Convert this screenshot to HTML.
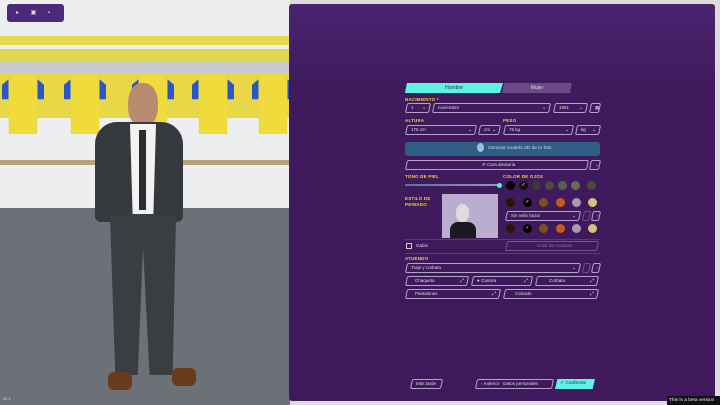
<!DOCTYPE html>
<html><head><meta charset="utf-8"><style>
*{box-sizing:border-box;margin:0;padding:0}
body{width:720px;height:405px;overflow:hidden;position:relative;background:#dcdcdc;font-family:"Liberation Sans",sans-serif}
.a{position:absolute}
.lbl{position:absolute;color:#f2d22a;font-size:4.5px;font-weight:bold;letter-spacing:.2px}
.sel{position:absolute;height:10px;border:1px solid #b7a2cf;border-radius:2px;transform:skewX(-12deg);color:#ddd;font-size:4.5px;line-height:8px;padding-left:4px}
.sel span{display:inline-block;transform:skewX(12deg)}
.sel .v{position:absolute;right:3px;top:0;font-size:5px}
.sw{position:absolute;width:9px;height:9px;border-radius:50%}
.jer{position:absolute;width:42px;height:58px}
</style></head><body>
<!-- scene -->
<div class="a" style="left:0;top:0;width:290px;height:405px;background:#eceeef"></div>
<div class="a" style="left:0;top:36px;width:290px;height:9px;background:#e6d94a"></div>
<div class="a" style="left:0;top:49px;width:290px;height:13px;background:#e0d64e"></div>
<div class="a" style="left:0;top:62px;width:290px;height:11px;background:#c8cad0"></div>
<div class="a" style="left:0;top:73px;width:290px;height:45px;background:#e8d848"></div>
<div class="a" style="left:0;top:160px;width:290px;height:5px;background:#b9a27a"></div>
<div class="a" style="left:0;top:208px;width:290px;height:197px;background:#6c7077"></div>
<div class="jer" style="left:2px;top:76px;background:linear-gradient(90deg,#2b56c8 0 16%,#efdc3c 16% 84%,#2b56c8 84%);clip-path:polygon(0 15%,25% 0,75% 0,100% 15%,100% 40%,84% 40%,84% 100%,16% 100%,16% 40%,0 40%)"></div>
<div class="jer" style="left:64px;top:76px;background:linear-gradient(90deg,#2b56c8 0 16%,#efdc3c 16% 84%,#2b56c8 84%);clip-path:polygon(0 15%,25% 0,75% 0,100% 15%,100% 40%,84% 40%,84% 100%,16% 100%,16% 40%,0 40%)"></div>
<div class="jer" style="left:132px;top:76px;background:linear-gradient(90deg,#2b56c8 0 16%,#efdc3c 16% 84%,#2b56c8 84%);clip-path:polygon(0 15%,25% 0,75% 0,100% 15%,100% 40%,84% 40%,84% 100%,16% 100%,16% 40%,0 40%)"></div>
<div class="jer" style="left:192px;top:76px;background:linear-gradient(90deg,#2b56c8 0 16%,#efdc3c 16% 84%,#2b56c8 84%);clip-path:polygon(0 15%,25% 0,75% 0,100% 15%,100% 40%,84% 40%,84% 100%,16% 100%,16% 40%,0 40%)"></div>
<div class="jer" style="left:252px;top:76px;background:linear-gradient(90deg,#2b56c8 0 16%,#efdc3c 16% 84%,#2b56c8 84%);clip-path:polygon(0 15%,25% 0,75% 0,100% 15%,100% 40%,84% 40%,84% 100%,16% 100%,16% 40%,0 40%)"></div>
<!-- man -->
<div class="a" style="left:128px;top:83px;width:30px;height:44px;border-radius:45%;background:#b98c70"></div>
<div class="a" style="left:95px;top:122px;width:88px;height:100px;border-radius:22px 22px 6px 6px;background:#35383c"></div>
<div class="a" style="left:130px;top:124px;width:26px;height:90px;background:#f2f2f2;clip-path:polygon(0 0,100% 0,90% 100%,10% 100%)"></div>
<div class="a" style="left:139px;top:130px;width:7px;height:80px;background:#2a2c2f"></div>
<div class="a" style="left:110px;top:215px;width:66px;height:160px;background:#3a3d41;clip-path:polygon(0 0,100% 0,95% 100%,60% 100%,50% 20%,42% 100%,8% 100%)"></div>
<div class="a" style="left:108px;top:372px;width:24px;height:18px;border-radius:6px;background:#6a3a1c"></div>
<div class="a" style="left:172px;top:368px;width:24px;height:18px;border-radius:6px;background:#6a3a1c"></div>
<!-- toolbar -->
<div class="a" style="left:7px;top:4px;width:57px;height:18px;border-radius:3px;background:#4b2a7c;color:#ddd;font-size:6px;line-height:18px;word-spacing:10px;padding-left:9px">▸ ▣ ▪</div>
<div class="a" style="left:3px;top:396px;color:#ddd;font-size:4px">20.1</div>
<!-- panel -->
<div class="a" style="left:289px;top:4px;width:426px;height:397px;border-radius:3px;background:linear-gradient(#4a2470,#3f1b5e 20%,#3e1a5c)"></div>
<!-- tabs -->
<div class="a" style="left:405px;top:83px;width:98px;height:10px;background:#5ff2e6;clip-path:polygon(2% 0,100% 0,97% 100%,0 100%);color:#1a2a3a;font-size:5px;text-align:center;line-height:10px">Hombre</div>
<div class="a" style="left:502px;top:83px;width:70px;height:10px;background:#6c4a8a;clip-path:polygon(3% 0,100% 0,97% 100%,0 100%);color:#ddd;font-size:5px;text-align:center;line-height:10px">Mujer</div>
<div class="lbl" style="left:405px;top:97px">NACIMIENTO *</div>
<div class="sel" style="left:406px;top:103px;width:24px"><span>1</span><span class="v">⌄</span></div>
<div class="sel" style="left:433px;top:103px;width:117px"><span>noviembre</span><span class="v">⌄</span></div>
<div class="sel" style="left:554px;top:103px;width:33px"><span>1981</span><span class="v">⌄</span></div>
<div class="sel" style="left:590px;top:103px;width:10px"><span>▦</span></div>
<div class="lbl" style="left:405px;top:118px">ALTURA</div>
<div class="lbl" style="left:503px;top:118px">PESO</div>
<div class="sel" style="left:406px;top:125px;width:70px"><span>175 cm</span><span class="v">⌄</span></div>
<div class="sel" style="left:479px;top:125px;width:21px"><span>cm</span><span class="v">⌄</span></div>
<div class="sel" style="left:504px;top:125px;width:69px"><span>75 kg</span><span class="v">⌄</span></div>
<div class="sel" style="left:576px;top:125px;width:24px"><span>kg</span><span class="v">⌄</span></div>
<div class="a" style="left:405px;top:142px;width:195px;height:14px;border-radius:3px;background:#2f5e86;color:#cfd8e2;font-size:4.8px;line-height:14px;padding-left:72px"><span style="display:inline-block;width:7px;height:9px;border-radius:50%;background:#9fc0d8;vertical-align:middle;margin-right:4px"></span>Generar modelo 3D de tu foto</div>
<div class="sel" style="left:406px;top:160px;width:182px;text-align:center"><span>⟳ Cara aleatoria</span></div>
<div class="sel" style="left:590px;top:160px;width:10px"><span>⌄</span></div>
<div class="lbl" style="left:405px;top:174px">TONO DE PIEL</div>
<div class="lbl" style="left:503px;top:174px">COLOR DE OJOS</div>
<div class="a" style="left:405px;top:184px;width:95px;height:2px;background:linear-gradient(90deg,#5a6fa8,#8a9ad0)"></div>
<div class="sw" style="left:497px;top:183px;width:5px;height:5px;background:#4ff0ea"></div>
<div class="sw" style="left:506px;top:181px;background:#000"></div>
<div class="sw" style="left:519px;top:181px;background:#111;color:#fff;font-size:5px;text-align:center;line-height:9px">✓</div>
<div class="sw" style="left:532px;top:181px;background:#3b3a3a"></div>
<div class="sw" style="left:545px;top:181px;background:#4d4a3a"></div>
<div class="sw" style="left:558px;top:181px;background:#55604b"></div>
<div class="sw" style="left:571px;top:181px;background:#6b6a52"></div>
<div class="sw" style="left:587px;top:181px;background:#4a4a3e"></div>
<div class="lbl" style="left:405px;top:196px;line-height:6px">ESTILO DE<br>PEINADO</div>
<div class="a" style="left:442px;top:194px;width:56px;height:44px;background:#b9aecf;overflow:hidden"><div class="a" style="left:14px;top:10px;width:13px;height:18px;border-radius:45%;background:#ddd"></div><div class="a" style="left:8px;top:28px;width:26px;height:18px;border-radius:8px 8px 0 0;background:#1a1a1e"></div></div>
<div class="sw" style="left:506px;top:198px;background:#2a1508"></div>
<div class="sw" style="left:523px;top:198px;background:#000;color:#fff;font-size:5px;text-align:center;line-height:9px">✓</div>
<div class="sw" style="left:539px;top:198px;background:#7a5020"></div>
<div class="sw" style="left:556px;top:198px;background:#c85a1e"></div>
<div class="sw" style="left:572px;top:198px;background:#a79ab0"></div>
<div class="sw" style="left:588px;top:198px;background:#d8c07a"></div>
<div class="sel" style="left:506px;top:211px;width:74px"><span>Sin vello facial</span><span class="v">⌄</span></div>
<div class="sel" style="left:583px;top:211px;width:7px;opacity:.4"></div>
<div class="sel" style="left:592px;top:211px;width:8px"><span>›</span></div>
<div class="sw" style="left:506px;top:224px;background:#2a1508"></div>
<div class="sw" style="left:523px;top:224px;background:#000;color:#fff;font-size:5px;text-align:center;line-height:9px">✓</div>
<div class="sw" style="left:539px;top:224px;background:#7a5020"></div>
<div class="sw" style="left:556px;top:224px;background:#c85a1e"></div>
<div class="sw" style="left:572px;top:224px;background:#a79ab0"></div>
<div class="sw" style="left:588px;top:224px;background:#d8c07a"></div>
<div class="a" style="left:405px;top:239px;width:195px;height:1px;background:#5a3a78"></div>
<div class="a" style="left:406px;top:243px;width:6px;height:6px;border:1px solid #ccc"></div>
<div class="a" style="left:416px;top:243px;color:#ddd;font-size:4.5px">Gafas</div>
<div class="sel" style="left:506px;top:241px;width:92px;opacity:.45;text-align:center"><span>Color de montura</span></div>
<div class="a" style="left:405px;top:253px;width:195px;height:1px;background:#5a3a78"></div>
<div class="lbl" style="left:405px;top:256px">ATUENDO</div>
<div class="sel" style="left:406px;top:263px;width:174px"><span>Traje y corbata</span><span class="v">⌄</span></div>
<div class="sel" style="left:583px;top:263px;width:7px;opacity:.4"></div>
<div class="sel" style="left:592px;top:263px;width:8px"><span>›</span></div>
<div class="sel" style="left:406px;top:276px;width:62px;padding-left:8px"><span>Chaqueta</span><span class="v">⤢</span></div>
<div class="sel" style="left:472px;top:276px;width:60px;padding-left:4px"><span>● Camisa</span><span class="v">⤢</span></div>
<div class="sel" style="left:536px;top:276px;width:62px;padding-left:12px"><span>Corbata</span><span class="v">⤢</span></div>
<div class="sel" style="left:406px;top:289px;width:94px;padding-left:8px"><span>Pantalones</span><span class="v">⤢</span></div>
<div class="sel" style="left:504px;top:289px;width:94px;padding-left:10px"><span>Calzado</span><span class="v">⤢</span></div>
<!-- bottom -->
<div class="sel" style="left:411px;top:379px;width:31px"><span>Más tarde</span></div>
<div class="sel" style="left:476px;top:379px;width:77px"><span>‹ Anterior · Datos personales</span></div>
<div class="a" style="left:555px;top:379px;width:40px;height:10px;background:#5ff2e6;clip-path:polygon(6% 0,100% 0,94% 100%,0 100%);color:#1a2a3a;font-size:4.8px;line-height:10px;padding-left:5px">✓ Confirmar</div>
<div class="a" style="left:667px;top:396px;width:53px;height:9px;background:#111;color:#eee;font-size:4.8px;line-height:9px;padding-left:2px">This is a beta version</div>
</body></html>
